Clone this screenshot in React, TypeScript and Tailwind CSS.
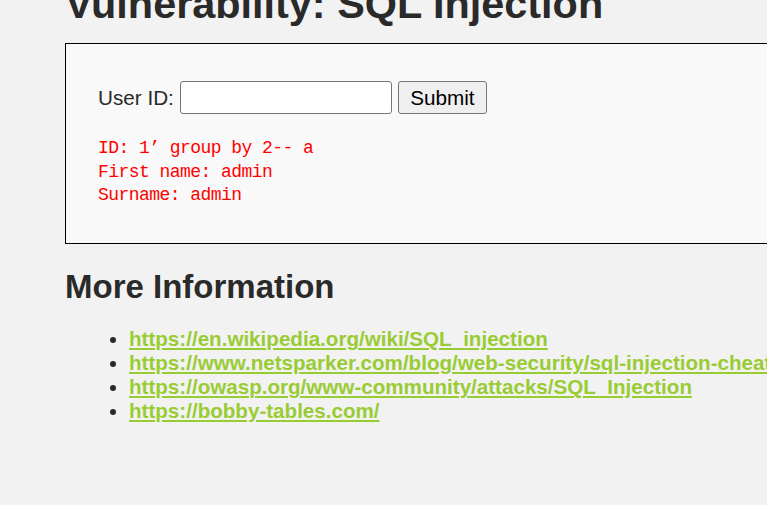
import { useState } from "react";

const LINKS = [
    "https://en.wikipedia.org/wiki/SQL_injection",
    "https://www.netsparker.com/blog/web-security/sql-injection-cheat-sheet/",
    "https://owasp.org/www-community/attacks/SQL_Injection",
    "https://bobby-tables.com/",
];

export default function App() {
    const [userId, setUserId] = useState("");

    return (
        <div className="min-h-screen flex flex-col overflow-hidden bg-[#f2f2f2] pl-[65px] text-[#2a2a2a] font-['Liberation_Sans',Arial,sans-serif]">
            <h1 className="-mt-[20px] text-[41.4px] font-bold leading-[48px] whitespace-nowrap">
                Vulnerability: SQL Injection
            </h1>

            {/* Vulnerable form box */}
            <div className="mt-[15px] w-[760px] shrink-0 border border-black bg-[#f8f9f8] pl-[32px] pt-[37px] pb-[35px]">
                <form className="flex items-center h-[33px]" onSubmit={(e) => e.preventDefault()}>
                    <label className="text-[20.7px]">User ID:</label>
                    <input
                        type="text"
                        value={userId}
                        onChange={(e) => setUserId(e.target.value)}
                        className="ml-[6px] w-[212px] h-[33px] bg-white border border-[#767676] rounded-[3px] px-1 text-[20px]"
                    />
                    <button
                        type="submit"
                        className="ml-[6px] w-[89px] h-[33px] bg-[#efefef] border border-[#767676] rounded-[3px] text-[20.7px] text-black"
                    >
                        Submit
                    </button>
                </form>
                <pre className="mt-[23px] text-[18px] leading-[23.6px] tracking-[-0.55px] text-[#ff0000] font-['Liberation_Mono','Courier_New',monospace]">
                    {"ID: 1’ group by 2-- a\nFirst name: admin\nSurname: admin"}
                </pre>
            </div>

            <h2 className="mt-[24px] text-[33px] font-bold leading-[37.7px] whitespace-nowrap">More Information</h2>
            <ul className="mt-[22px] pl-[64px] list-disc">
                {LINKS.map((href) => (
                    <li key={href} className="text-[20.6px] leading-[24px] font-bold whitespace-nowrap">
                        <a href={href} className="text-[#99cc33] underline">
                            {href}
                        </a>
                    </li>
                ))}
            </ul>
        </div>
    );
}
